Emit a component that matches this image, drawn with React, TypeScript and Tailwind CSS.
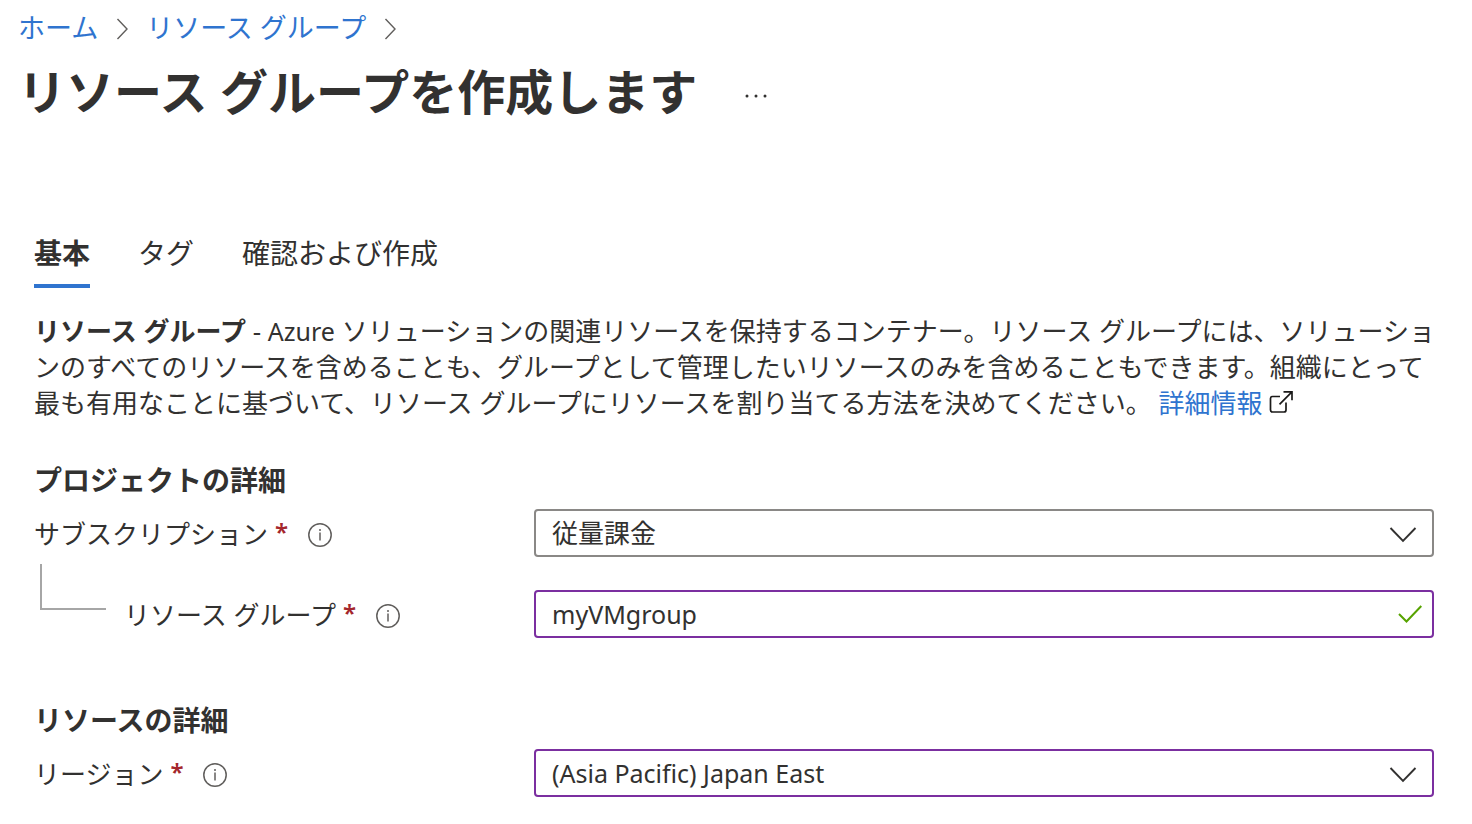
import type { ReactNode } from "react";

const font = "font-['Noto_Sans','Noto_Sans_CJK_JP',sans-serif]";

function Crumb() {
  return (
    <svg aria-hidden="true" className="h-6 w-3" viewBox="0 0 12 24" fill="none" stroke="#605e5c" strokeWidth="1.4">
      <path d="M1.500 3 11 13 1.500 23" />
    </svg>
  );
}

function Info({ label }: { label: string }) {
  return (
    <button type="button" aria-label={label} className="mt-[2px] shrink-0">
      <svg className="size-6" viewBox="0 0 24 24" fill="none" stroke="#605e5c" strokeWidth="1.5">
        <circle cx="12" cy="12" r="11.200" />
        <path d="M12 9.500v8" />
        <circle cx="12" cy="7" r="1" fill="#605e5c" stroke="none" />
      </svg>
    </button>
  );
}

function Chevron() {
  return (
    <svg aria-hidden="true" className="pointer-events-none absolute top-4 right-[17px] h-[18px] w-7" viewBox="0 0 28 18" fill="none" stroke="#323130" strokeWidth="1.900">
      <path d="M1.500 3 14 15.800 26.500 3" />
    </svg>
  );
}

function Label({ id, children }: { id: string; children: ReactNode }) {
  return (
    <div className="flex h-12 items-center gap-5 pt-[2px]">
      <label htmlFor={id} className="flex gap-[7px] whitespace-nowrap">
        {children}
        <span className="w-[13px] text-[24px] leading-8 font-semibold text-[#a4262c]">*</span>
      </label>
      <Info label="情報" />
    </div>
  );
}

const field = "block h-12 w-full appearance-none rounded-[4px] border-2 bg-white px-4 outline-none";

export default function App() {
  return (
    <div lang="ja" className={`${font} min-h-screen bg-white text-[26px] leading-9 text-[#323130]`}>
      <header className="px-[18px] pt-2">
        <nav className="flex items-center gap-[18px] text-[27px] leading-10 text-[#2f74cf]">
          <a href="#home">ホーム</a>
          <Crumb />
          <a href="#groups">リソース グループ</a>
          <Crumb />
        </nav>
        <div className="flex items-center gap-12 pt-2">
          <h1 className="text-[48px] leading-[72px] font-bold">リソース グループを作成します</h1>
          <button type="button" aria-label="その他" className="pt-2">
            <svg className="h-2 w-6" viewBox="0 0 24 8" fill="#323130">
              <circle cx="2" cy="4" r="1.500" />
              <circle cx="11" cy="4" r="1.500" />
              <circle cx="20" cy="4" r="1.500" />
            </svg>
          </button>
        </div>
      </header>
      <main className="px-[34px] pt-[104px]">
        <div role="tablist" className="flex gap-12 text-[28px] leading-[42px]">
          <button type="button" role="tab" aria-selected="true" className="border-b-4 border-[#2f74cf] pb-[10px] font-bold">基本</button>
          <button type="button" role="tab" aria-selected="false" className="border-b-4 border-transparent pb-[10px]">タグ</button>
          <button type="button" role="tab" aria-selected="false" className="border-b-4 border-transparent pb-[10px]">確認および作成</button>
        </div>
        <p className="pt-[25px]">
          <b>リソース グループ</b> - <span className="text-[25px]">Azure</span> ソリューションの関連リソースを保持するコンテナー。リソース グループには、ソリューションのすべてのリソースを含めることも、グループとして管理したいリソースのみを含めることもできます。組織にとって最も有用なことに基づいて、リソース グループにリソースを割り当てる方法を決めてください。{" "}
          <a href="#more" className="text-[#2f74cf]">詳細情報</a>{" "}
          <svg aria-hidden="true" className="-mt-2 inline size-6 align-middle" viewBox="0 0 24 24" fill="none" stroke="#1b1a19" strokeWidth="1.700">
            <path d="M11 6.500H3.500a2 2 0 0 0-2 2V20a2 2 0 0 0 2 2H15a2 2 0 0 0 2-2v-7.500M14.500 1.800H23v8.500M22.700 2.100 10.500 14.300" />
          </svg>
        </p>
        <h2 className="pt-[39px] text-[28px] leading-10 font-bold">プロジェクトの詳細</h2>
        <div className="grid grid-cols-[500px_1fr] pt-[9px] pr-1">
          <Label id="subscription">サブスクリプション</Label>
          <div className="relative">
            <select id="subscription" className={`${field} border-[#8a8886]`}><option>従量課金</option></select>
            <Chevron />
          </div>
        </div>
        <div className="grid grid-cols-[500px_1fr] pr-1">
          <div className="flex items-start gap-[18px] pl-[6px]">
            <span className="mt-[7px] h-[46px] w-[66px] border-b-2 border-l-2 border-[#a6a6a6]" />
            <div className="pt-[33px]">
              <Label id="group">リソース グループ</Label>
            </div>
          </div>
          <div className="pt-[33px]">
            <div className="relative">
              <input id="group" defaultValue="myVMgroup" className={`${field} border-[#7b2fa0] text-[25px]`} />
              <svg aria-hidden="true" className="absolute top-[14px] right-3 h-5 w-6" viewBox="0 0 24 20" fill="none" stroke="#57a300" strokeWidth="2">
                <path d="M1 10 8.500 17.500 23.300 2" />
              </svg>
            </div>
          </div>
        </div>
        <h2 className="pt-[62px] text-[28px] leading-10 font-bold">リソースの詳細</h2>
        <div className="grid grid-cols-[500px_1fr] pt-[9px] pr-1">
          <Label id="region">リージョン</Label>
          <div className="relative">
            <select id="region" className={`${field} border-[#7b2fa0] text-[25px]`}><option>(Asia Pacific) Japan East</option></select>
            <Chevron />
          </div>
        </div>
      </main>
    </div>
  );
}
